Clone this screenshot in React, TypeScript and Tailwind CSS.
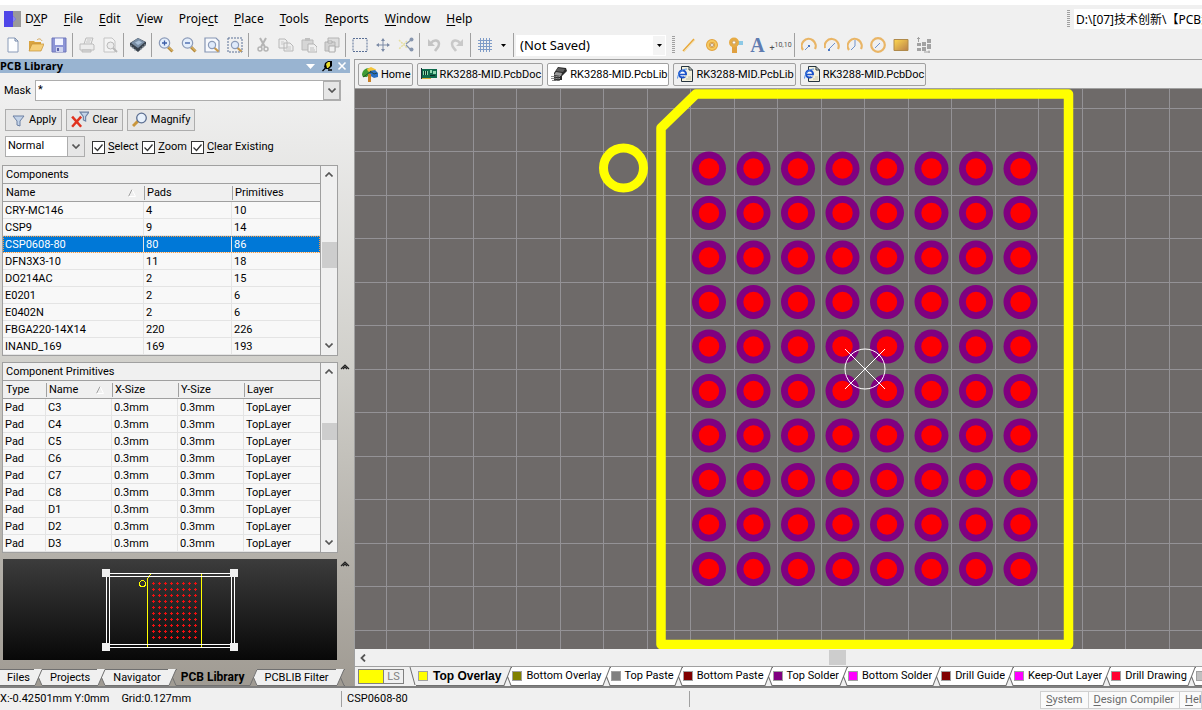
import type { ReactNode } from 'react'
import clsx from 'clsx'

const components = [
  ['CRY-MC146', '4', '10'],
  ['CSP9', '9', '14'],
  ['CSP0608-80', '80', '86'],
  ['DFN3X3-10', '11', '18'],
  ['DO214AC', '2', '15'],
  ['E0201', '2', '6'],
  ['E0402N', '2', '6'],
  ['FBGA220-14X14', '220', '226'],
  ['INAND_169', '169', '193'],
]

const primitives = ['C3', 'C4', 'C5', 'C6', 'C7', 'C8', 'D1', 'D2', 'D3'].map((name) => [
  'Pad',
  name,
  '0.3mm',
  '0.3mm',
  'TopLayer',
])

const menus = [
  ['D', 'X', 'P'],
  ['', 'F', 'ile'],
  ['', 'E', 'dit'],
  ['', 'V', 'iew'],
  ['Proje', 'c', 't'],
  ['', 'P', 'lace'],
  ['', 'T', 'ools'],
  ['', 'R', 'eports'],
  ['', 'W', 'indow'],
  ['', 'H', 'elp'],
]

const layers = [
  { name: 'Bottom Overlay', color: 'bg-[#808000]' },
  { name: 'Top Paste', color: 'bg-[#808080]' },
  { name: 'Bottom Paste', color: 'bg-[#800000]' },
  { name: 'Top Solder', color: 'bg-[#800080]' },
  { name: 'Bottom Solder', color: 'bg-[#ff00ff]' },
  { name: 'Drill Guide', color: 'bg-[#800000]' },
  { name: 'Keep-Out Layer', color: 'bg-[#ff00ff]' },
  { name: 'Drill Drawing', color: 'bg-[#ff0030]' },
  { name: '', color: 'bg-[#c0c0c0]' },
]

const range = (n: number) => Array.from({ length: n }, (_, i) => i)

const Icon = ({ children, size = 'size-4' }: { children: ReactNode; size?: string }) => (
  <svg viewBox="0 0 16 16" className={clsx('shrink-0', size)} fill="none" aria-hidden="true">
    {children}
  </svg>
)

const Tool = ({ label, children }: { label: string; children: ReactNode }) => (
  <button type="button" aria-label={label} className="flex h-6 w-[23px] shrink-0 items-center justify-center">
    <Icon>{children}</Icon>
  </button>
)

const Sep = () => <div className="mx-0.5 h-6 w-px shrink-0 bg-[#a0a0a0]" />

const Grip = () => (
  <svg viewBox="0 0 3 18" className="h-[18px] w-[3px] shrink-0" aria-hidden="true">
    {range(9).map((i) => (
      <path key={i} d={`M0 ${i * 2 + 0.5}h3`} stroke="#a0a0a0" />
    ))}
  </svg>
)

const Glass = ({ sign }: { sign: string }) => (
  <>
    <path d="M10 10l4.5 4.5" stroke="#b58a3c" strokeWidth="3" />
    <path d="M10.500 10l4 4" stroke="#ecc878" />
    <circle cx="6.500" cy="6" r="5.200" fill="#e4eefb" stroke="#8c9bb8" strokeWidth="1.200" />
    <path d={sign} stroke="#3c5fa8" strokeWidth="1.300" />
  </>
)

const LensOverlay = () => (
  <>
    <path d="M10 10.500l4.500 4" stroke="#c99a4c" strokeWidth="2.200" />
    <circle cx="8" cy="8" r="3.600" fill="#dfeafb" stroke="#8c9bb8" strokeWidth="1.200" />
  </>
)

const ChipIcon = () => (
  <Icon>
    <path d="M3 7l4-6 8 1 1 3-5 5v4H3z" fill="#2b2b2b" />
    <path d="M7 2l7 1-2 3-7-1z" fill="#5e5e5e" />
    <path d="M5 6l6 1-1 3-7-1z" fill="#9a9a9a" />
    <path d="M0 10.500h9M0 12.500h9M1 14.500h8" stroke="#8a8a8a" />
    <path d="M4 9v6M7 10v5" stroke="#4a4a4a" />
  </Icon>
)

const HomeIcon = () => (
  <Icon>
    <path d="M0 9c0-4 3-7 7-7l2 4-4 5H1z" fill="#3f9b34" />
    <path d="M5 3l4-2 5 2.500-1 3-7-1z" fill="#f3c53b" />
    <path d="M8 5l5-1 3 3v4l-4 1-5-3z" fill="#2b6fc4" />
    <path d="M6 8h3v8H6z" fill="#c98128" />
    <path d="M1 11c3-1 4-4 8-5M8 5l4 3 3-1" stroke="#1d3b24" strokeWidth="0.800" />
  </Icon>
)

const BoardIcon = () => (
  <Icon>
    <path d="M0 3h16v9H0z" fill="#0f6b4c" />
    <path d="M2 5h5v4H2zM9 4h2v3H9zM12 5h3v3h-3z" fill="#8ed8ae" />
    <path d="M3.500 5v4M5.500 5v4M9 9.500h5" stroke="#0a2f25" />
    <path d="M1 12.500h9" stroke="#d6b13c" />
    <path d="M0.500 2v11" stroke="#1c2f38" />
  </Icon>
)

const WebIcon = () => (
  <Icon>
    <path d="M4.500 0.500H12L15.500 4v11.500h-11z" fill="#f3f0dc" stroke="#26343f" />
    <path d="M12 0.500V4h3.500" stroke="#26343f" />
    <path d="M9 13h5M11 11h3" stroke="#c7c4a8" />
    <circle cx="5.500" cy="8" r="3.500" fill="#fff" stroke="#1b52c8" strokeWidth="2" />
    <path d="M3 8.500h6.500" stroke="#1b52c8" strokeWidth="1.600" />
    <path d="M7 10h3" stroke="#f3f0dc" strokeWidth="1.400" />
    <path d="M0.500 12.500C1 7 5 3 10 3" stroke="#4b8be6" />
  </Icon>
)

const arcs: Record<string, ReactNode> = {
  'Arc by Center': (
    <>
      <path d="M2 13A7 7 0 1 1 14 12" stroke="#e9b566" strokeWidth="2.200" />
      <path d="M4 13l4-4" stroke="#6e92cc" />
      <path d="M7 8h2v2H7z" fill="#4a77c4" />
    </>
  ),
  'Arc by Edge': (
    <>
      <path d="M1 11A7 7 0 1 1 14 12" stroke="#e9b566" strokeWidth="2.200" />
      <path d="M5 12l6-6" stroke="#6e92cc" />
      <path d="M4 12h2v2H4z" fill="#4a77c4" />
    </>
  ),
  'Arc any Angle': (
    <>
      <path d="M2 13A7 7 0 1 1 14 12" stroke="#e9b566" strokeWidth="2.200" />
      <path d="M8 3v6l-4 4" stroke="#6e92cc" />
    </>
  ),
  'Full Circle': (
    <>
      <circle cx="8" cy="8" r="6.800" stroke="#e9b566" strokeWidth="2.200" />
      <path d="M5 11l5-5" stroke="#6e92cc" />
    </>
  ),
}

const Toolbar = () => (
  <div className="flex h-[27px] items-center pb-px pl-px">
    <Tool label="New">
      <path d="M3 1h7l3 3v11H3z" fill="#fdfeff" stroke="#8a9bb8" />
      <path d="M10 1v3h3" stroke="#6f83a6" />
    </Tool>
    <Tool label="Open">
      <path d="M1 14V4h5l1 1h6v3H5z" fill="#d9a441" />
      <path d="M1 14l3-7h12l-3 7z" fill="#f5cf7a" stroke="#c48f34" strokeWidth="0.700" />
      <path d="M9 3c2-2 4-1 5 1" stroke="#d5a657" />
    </Tool>
    <Tool label="Save">
      <path d="M1 1h14v14H1z" fill="#8d95d6" stroke="#6f77ba" />
      <path d="M4 1.500h8V8H4z" fill="#f2f4ff" />
      <path d="M5 10h7v5H5z" fill="#cfd4ef" />
      <path d="M6 11h2v3H6z" fill="#5a62a8" />
    </Tool>
    <Sep />
    <Tool label="Print">
      <path d="M5 7l2-6h7l-2 6M1 7h13l1 1v5H1z" fill="#ececec" stroke="#bcbcbc" />
      <path d="M3 13h9v2H3z" fill="#dadada" stroke="#bcbcbc" />
      <path d="M8 3h4M7 5h4" stroke="#c8c8c8" />
    </Tool>
    <Tool label="Print Preview">
      <path d="M2 1h8l3 3v11H2z" fill="#f4f4f4" stroke="#c4c4c4" />
      <circle cx="8.500" cy="8.500" r="3.500" fill="#ececec" stroke="#bababa" />
      <path d="M11 11l4 4" stroke="#bababa" strokeWidth="2" />
    </Tool>
    <Sep />
    <Tool label="Browse Components">
      <path d="M0 6l8-5 8 4v3l-8 7-8-6z" fill="#39424c" />
      <path d="M1 6l7-5 7 4-7 6z" fill="#7b8fa5" />
      <path d="M5 5.500l4-2 3 2-4 2.500z" fill="#a9bfd6" />
      <path d="M1 8v2M3 10v2M5 12v2M11 11v2M13 9v2M15 7v2" stroke="#9aa4ae" />
    </Tool>
    <Sep />
    <Tool label="Zoom In">
      <Glass sign="M4 6h5M6.500 3.500v5" />
    </Tool>
    <Tool label="Zoom Out">
      <Glass sign="M4 6h5" />
    </Tool>
    <Tool label="Fit Document">
      <path d="M1 1h11l3 3v11H1z" fill="#f7f9fd" stroke="#8595b4" strokeWidth="1.200" />
      <LensOverlay />
    </Tool>
    <Tool label="Zoom Area">
      <path d="M1 1h14v14H1z" stroke="#5b7096" strokeDasharray="2 1" />
      <LensOverlay />
    </Tool>
    <Sep />
    <Tool label="Cut">
      <path d="M5 1l5 9M11 1L6 10" stroke="#b4b4b4" strokeWidth="2" />
      <circle cx="5" cy="12" r="2" stroke="#b4b4b4" strokeWidth="1.500" />
      <circle cx="11" cy="12" r="2" stroke="#b4b4b4" strokeWidth="1.500" />
    </Tool>
    <Tool label="Copy">
      <path d="M1 2h6l2 2v7H1zM6 6h6l3 3v5H6z" fill="#eee" stroke="#b8b8b8" />
      <path d="M8 10h5M8 12h5M3 5h3M3 7h3" stroke="#c8c8c8" />
    </Tool>
    <Tool label="Paste">
      <path d="M1 3h11v10H1z" fill="#d6d6d6" stroke="#bababa" />
      <path d="M4 1h5v3H4z" fill="#c0c0c0" />
      <path d="M7 7h6l3 3v5H7z" fill="#f0f0f0" stroke="#b4b4b4" />
      <path d="M9 11h4M9 13h5" stroke="#c0c0c0" />
    </Tool>
    <Tool label="Rubber Stamp">
      <path d="M4 1h11v9H4z" fill="#dedede" stroke="#b4b4b4" />
      <path d="M1 5h10v9H1z" fill="#d2d2d2" stroke="#b4b4b4" />
      <path d="M4 4h4v2H4zM5 9h6v6H5z" fill="#f0f0f0" stroke="#acacac" />
    </Tool>
    <Sep />
    <Tool label="Select Area">
      <path d="M1 1.500h14v13H1z" stroke="#5b7096" strokeDasharray="2 1" />
    </Tool>
    <Tool label="Move Selection">
      <path d="M8 2v12M2 8h12" stroke="#7c8ba6" />
      <path d="M8 1L6 4h4zM8 15l-2-3h4zM1 8l3-2v4zM15 8l-3-2v4z" fill="#7c8ba6" />
    </Tool>
    <Tool label="Deselect All">
      <path d="M1 3l8 8M9 4l-8 8" stroke="#e6dfa0" strokeWidth="1.500" strokeDasharray="2 1" />
      <path d="M8 7l5-4M8 8l5 5" stroke="#8695ad" strokeWidth="1.300" />
      <circle cx="13.500" cy="2.500" r="2" fill="#8695ad" />
      <circle cx="13.500" cy="12.500" r="2" fill="#8695ad" />
    </Tool>
    <Sep />
    <Tool label="Undo">
      <path d="M5 6c3-4 8-3 8 1 0 3-2 4-4 7" stroke="#c4c4c4" strokeWidth="2.500" />
      <path d="M2 2v7h7z" fill="#c4c4c4" />
    </Tool>
    <Tool label="Redo">
      <path d="M11 6C8 2 3 3 3 7c0 3 2 4 4 7" stroke="#c9c9c9" strokeWidth="2.500" />
      <path d="M14 2v7H7z" fill="#c9c9c9" />
    </Tool>
    <Sep />
    <Tool label="Grids">
      <path d="M3.500 1v14M6.500 1v14M9.500 1v14M12.500 1v14M1 3.500h14M1 6.500h14M1 9.500h14M1 12.500h14" stroke="#7f9cc8" />
    </Tool>
    <button type="button" aria-label="Grid options" className="flex h-6 w-[15px] items-center justify-center">
      <svg viewBox="0 0 5 3" className="h-[3px] w-[5px]">
        <path d="M0 0h5L2.500 3z" />
      </svg>
    </button>
    <Sep />
    <div className="relative h-[21px] w-[150px] shrink-0">
      <select
        aria-label="Variant"
        className="size-full appearance-none bg-white pl-1 font-['Noto_Sans',sans-serif] text-[13px] leading-5 outline-none"
      >
        <option>(Not Saved)</option>
      </select>
      <span className="pointer-events-none absolute inset-y-px right-px flex w-3 items-center justify-center bg-[#f4f4f4]">
        <svg viewBox="0 0 5 3" className="h-[3px] w-[5px]">
          <path d="M0 0h5L2.500 3z" />
        </svg>
      </span>
    </div>
    <div className="flex items-center pr-0.5 pl-1.5">
      <Grip />
    </div>
    <Tool label="Place Line">
      <path d="M2 14L13 2" stroke="#e8a838" strokeWidth="1.500" />
      <path d="M3 15L14 3" stroke="#f6d78c" strokeWidth="0.700" />
    </Tool>
    <Tool label="Place Pad">
      <circle cx="8" cy="8" r="4" stroke="#e3a23a" strokeWidth="4" />
      <circle cx="8" cy="8" r="4" stroke="#f4c963" strokeWidth="2" />
      <circle cx="8" cy="8" r="1.500" fill="#fff" stroke="#a8762a" strokeWidth="0.700" />
    </Tool>
    <Tool label="Place Via">
      <path d="M8 4h8v4H8z" fill="#8cc9e6" />
      <path d="M5 8h5v8H5z" fill="#e0a040" />
      <circle cx="7" cy="5.500" r="3.500" fill="#fff" stroke="#e6ab45" strokeWidth="3" />
      <circle cx="7" cy="5.500" r="1.700" stroke="#b98332" strokeWidth="0.800" />
    </Tool>
    <button
      type="button"
      aria-label="Place String"
      className="h-6 w-[23px] shrink-0 text-center font-['Liberation_Serif',serif] text-xl leading-6 font-bold text-[#5f7cb0]"
    >
      A
    </button>
    <button
      type="button"
      aria-label="Place Coordinate"
      className="flex h-6 w-[23px] shrink-0 items-center justify-center text-[#505050]"
    >
      <span className="pt-1.5 text-[9px] leading-3">+</span>
      <span className="text-[7px] leading-3">10,10</span>
    </button>
    <Sep />
    {Object.entries(arcs).map(([label, shape]) => (
      <Tool key={label} label={label}>
        {shape}
      </Tool>
    ))}
    <Tool label="Place Fill">
      <defs>
        <linearGradient id="fill" x1="0" y1="0" x2="1" y2="1">
          <stop offset="0" stopColor="#ffd94f" />
          <stop offset="1" stopColor="#b97f4a" />
        </linearGradient>
      </defs>
      <path d="M1 2.500h14v11H1z" fill="url(#fill)" stroke="#b08a4a" />
    </Tool>
    <Tool label="Array Placement">
      <path d="M6 5h4v4H6zM11 2h4v4h-4zM6 10h4v4H6zM11 7h4v5h-4zM1 6h4v3H1zM1 11h4v3H1z" fill="#a2a2a2" />
      <path d="M2.500 5V0M1 1.500h3M8 15h6M13 13.500v3" stroke="#a2a2a2" />
    </Tool>
  </div>
)

const Header = () => (
  <header className="shrink-0 bg-[#f0f0f0]">
    <div className="h-[5px] bg-white" />
    <div className="flex h-[27px] items-center font-['Noto_Sans',sans-serif] text-xs leading-4">
      <svg viewBox="0 0 17 16" className="ml-1 h-4 w-[17px] shrink-0">
        <path d="M9 0h8v16H9z" fill="#9a9a9a" />
        <path d="M0 0h9v5l3 3-3 3v5H0z" fill="#4f46e8" />
        <path d="M9 5l3 3-3 3z" fill="#8d89e8" />
      </svg>
      <nav className="flex flex-1 gap-4 pl-1">
        {menus.map(([before, key, after]) => (
          <button type="button" key={before + key + after}>
            {before}
            <span className="underline underline-offset-2">{key}</span>
            {after}
          </button>
        ))}
      </nav>
      <Grip />
      <input
        aria-label="Address"
        readOnly
        value="D:\[07]技术创新\【PCB封装】"
        className="ml-1 h-5 w-[128px] bg-white pl-0.5 font-['Noto_Sans','Noto_Sans_CJK_SC',sans-serif] text-xs outline-none"
      />
    </div>
    <Toolbar />
  </header>
)

const Chevron = ({ up }: { up?: boolean }) => (
  <svg viewBox="0 0 8 5" className="h-[5px] w-2" fill="none">
    <path d={up ? 'M0.500 4.500L4 1l3.500 3.500' : 'M0.500 0.500L4 4 7.500 0.500'} stroke="#555" strokeWidth="1.600" />
  </svg>
)

const Collapse = () => (
  <button type="button" aria-label="Collapse" className="ml-0.5 pt-0.5">
    <svg viewBox="0 0 10 6" className="h-1.5 w-2.5" fill="none">
      <path d="M1 5l4-4 4 4M3 5l2-2 2 2" stroke="#222" strokeWidth="1.200" />
    </svg>
  </button>
)

interface GridBoxProps {
  title: string
  columns: { label: string; width: string }[]
  rows: string[][]
  sorted: number
  selected?: number
  collapsible?: boolean
  thumb: string
}

const GridBox = ({ title, columns, rows, sorted, selected, collapsible, thumb }: GridBoxProps) => (
  <div className="flex items-start">
    <div className="flex w-[336px] border border-[#a0a0a0] bg-[#f8f8f8]">
      <table className="w-[317px] table-fixed border-separate border-spacing-0 border-r border-[#a0a0a0] text-left">
        <caption className="h-[18px] border-r border-b border-[#a0a0a0] bg-[#f0f0f0] pt-px pl-[3px] text-left leading-4">
          {title}
        </caption>
        <thead>
          <tr>
            {columns.map(({ label, width }, i) => (
              <th
                key={label}
                className={clsx('h-[18px] border-b border-[#a0a0a0] bg-[#f0f0f0] p-0 pt-px font-normal', width)}
              >
                <div
                  className={clsx(
                    'flex h-3.5 items-center justify-between leading-[14px]',
                    i > 0 ? 'border-l border-[#a0a0a0] pl-0.5' : 'pl-[3px]',
                  )}
                >
                  {label}
                  {i === sorted && (
                    <svg viewBox="0 0 8 8" className="mr-2 size-2" fill="none">
                      <path d="M0.500 7.500L4 0.500" stroke="#a0a0a0" />
                      <path d="M4 0.500l3.500 7H0.500" stroke="#fff" />
                    </svg>
                  )}
                </div>
              </th>
            ))}
          </tr>
        </thead>
        <tbody>
          {rows.map((row, r) => (
            <tr
              key={row.join()}
              className={clsx(
                r === selected &&
                  'bg-[#0078d7] text-white outline-1 -outline-offset-1 outline-dotted outline-[#ff9a3c]',
              )}
            >
              {row.map((cell, c) => (
                <td
                  key={c}
                  className="h-[17px] border-r border-b border-[#e4e4e4] p-0 pt-px pl-0.5 leading-[15px] last:border-r-0"
                >
                  {cell}
                </td>
              ))}
            </tr>
          ))}
        </tbody>
      </table>
      <div className="flex flex-1 flex-col items-center bg-[#f0f0f0] pb-px">
        <button type="button" aria-label="Scroll up" className="flex h-[17px] items-center">
          <Chevron up />
        </button>
        <div className="flex w-full flex-1 flex-col items-center">
          <div className={clsx('w-[15px] bg-[#cdcdcd]', thumb)} />
        </div>
        <button type="button" aria-label="Scroll down" className="flex h-[17px] items-center">
          <Chevron />
        </button>
      </div>
    </div>
    {collapsible && <Collapse />}
  </div>
)

const Preview = () => (
  <div className="flex items-start">
    <svg viewBox="2 559 336 101" className="h-[101px] w-[336px] shrink-0" fill="none" shapeRendering="crispEdges">
      <defs>
        <linearGradient id="shade" x1="0" y1="0" x2="0" y2="1">
          <stop offset="0" stopColor="#3c3c3c" />
          <stop offset="1" stopColor="#080808" />
        </linearGradient>
      </defs>
      <path d="M3 559h334v101H3z" fill="url(#shade)" />
      <path d="M147.500 647V579l3-5M201.500 574v73" stroke="#ff0" />
      <circle cx="142.500" cy="583.500" r="3" stroke="#ff0" />
      {range(80).map((i) => (
        <path
          key={i}
          d={`M${152 + (i % 8) * 6} ${583.5 + Math.floor(i / 8) * 6}h3m-1.500 -1.500v3`}
          stroke="#f01010"
        />
      ))}
      <path d="M106.500 573.500h128v74h-128zM109.500 576.500h122v68h-122z" stroke="#fff" />
      <path d="M102 569h8v8h-8zM230 569h8v8h-8zM102 643h8v8h-8zM230 643h8v8h-8z" fill="#f0f0f0" />
    </svg>
    <Collapse />
  </div>
)

const Check = ({ id, letter, rest }: { id: string; letter: string; rest: string }) => (
  <span className="flex items-center gap-[3px]">
    <span className="relative flex size-[13px]">
      <input
        id={id}
        type="checkbox"
        defaultChecked
        className="peer size-[13px] appearance-none border border-[#333] bg-white"
      />
      <svg viewBox="0 0 13 13" className="pointer-events-none absolute inset-0 opacity-0 peer-checked:opacity-100">
        <path d="M2.500 6.500l3 3 5-6" stroke="#333" strokeWidth="1.300" fill="none" />
      </svg>
    </span>
    <label htmlFor={id}>
      <span className="underline underline-offset-2">{letter}</span>
      {rest}
    </label>
  </span>
)

const PanelButton = ({ children }: { children: ReactNode }) => (
  <button
    type="button"
    className="flex h-[22px] items-center gap-[3px] border border-[#adadad] bg-[#e6e6e6] px-1 leading-4"
  >
    {children}
  </button>
)

// Slanted edge shared by two neighbouring tabs
const Slant = ({ left, right, gap }: { left: string; right: string; gap: string }) => (
  <svg viewBox="0 0 9 17" className="h-full w-[9px] shrink-0" preserveAspectRatio="none" fill="none">
    <path d="M0 0h8L1 17H0z" fill={left} />
    <path d="M8 0h1v17H8L4.500 8z" fill={right} />
    <path d="M1 17L4.500 8 8 17z" fill={gap} />
    <path d="M0 16.500h1L8 0.500h1M4.500 8.500L8 16.500h1" stroke="#707070" />
  </svg>
)

const PanelTabs = () => {
  const tabs = ['Files', 'Projects', 'Navigator', 'PCB Library', 'PCBLIB Filter']
  const fill = (i: number) => (i === 3 || i >= tabs.length ? 'none' : '#f0f0f0')
  return (
    <div role="tablist" className="mt-auto flex h-[17px]">
      {tabs.map((name, i) => (
        <div key={name} className="flex">
          <button
            type="button"
            role="tab"
            aria-selected={i === 3}
            className={clsx(
              'border-b border-[#707070] leading-[14px]',
              i === 3 ? 'px-1 text-xs font-bold' : 'border-t bg-[#f0f0f0]',
              i === 0 && 'pr-1 pl-[7px]',
              i !== 0 && i !== 3 && 'px-[7px]',
            )}
          >
            {name}
          </button>
          <Slant left={fill(i)} right={fill(i + 1)} gap="none" />
        </div>
      ))}
    </div>
  )
}

const LibraryPanel = () => (
  <aside className="flex w-[354px] shrink-0 flex-col bg-linear-to-b from-[#f0f0f0] from-5% via-[#d0cfca] via-50% to-[#a09b93]">
    <div className="flex h-3.5 w-[350px] items-center justify-between overflow-hidden bg-[#99b4d1]">
      <h2 className="font-['Noto_Sans',sans-serif] text-[11px] leading-[14px] font-bold">PCB Library</h2>
      <svg viewBox="0 0 44 12" className="h-3 w-11">
        <path d="M0 4h9L4.500 9z" fill="#fff" />
        <path d="M19 3l3-2h4v5l-3 3h-3l-2-2z" fill="#000" />
        <path d="M20 4l2-2h2v4l-2 2h-1z" fill="#e8dc2c" />
        <path d="M16.500 11l3-3M22 10h4" stroke="#000" strokeWidth="1.300" />
        <path d="M32.500 2.500l7 7M39.500 2.500l-7 7" stroke="#fff" strokeWidth="1.600" />
      </svg>
    </div>
    <div className="flex items-center pt-[7px] pl-1">
      <label htmlFor="mask" className="w-[31px] pt-0.5">
        Mask
      </label>
      <div className="flex h-[21px] w-[306px] border border-[#adadad] bg-white">
        <input id="mask" defaultValue="*" className="min-w-0 flex-1 bg-transparent px-0.5 outline-none" />
        <button
          type="button"
          aria-label="Mask history"
          className="flex w-[17px] items-center justify-center border border-[#adadad] bg-[#e6e6e6]"
        >
          <Chevron />
        </button>
      </div>
    </div>
    <div className="flex gap-1 pt-2 pl-[5px]">
      <PanelButton>
        <Icon>
          <path d="M3 4h11l-4 5v5l-3-1V9z" fill="#c3d3e8" stroke="#6c80a3" />
        </Icon>
        <span className="pr-px">Apply</span>
      </PanelButton>
      <PanelButton>
        <Icon size="size-[18px]">
          <path d="M8 1h8l-3 4v4l-2-1V5z" fill="#c3d3e8" stroke="#6c80a3" />
          <path d="M1 5l8 9M9 5l-8 9" stroke="#e0321e" strokeWidth="2.200" />
        </Icon>
        Clear
      </PanelButton>
      <PanelButton>
        <Icon>
          <path d="M6 9l-5 5" stroke="#c9963c" strokeWidth="3" />
          <circle cx="9.500" cy="6" r="4.800" fill="#e8f1fc" stroke="#5c6f92" strokeWidth="1.300" />
        </Icon>
        Magnify
      </PanelButton>
    </div>
    <div className="flex items-center pt-[5px] pb-2 pl-[5px]">
      <div className="relative mr-[7px] h-[21px] w-20">
        <select
          aria-label="Mode"
          className="size-full appearance-none border border-[#adadad] bg-white pl-0.5 outline-none"
        >
          <option>Normal</option>
        </select>
        <span className="pointer-events-none absolute inset-y-0 right-0 flex w-[18px] items-center justify-center border border-[#adadad] bg-[#e6e6e6]">
          <Chevron />
        </span>
      </div>
      <div className="flex gap-1 pt-0.5">
        <Check id="select" letter="S" rest="elect" />
        <Check id="zoom" letter="Z" rest="oom" />
        <Check id="existing" letter="C" rest="lear Existing" />
      </div>
    </div>
    <div className="flex flex-col gap-1.5 pl-0.5">
      <GridBox
        title="Components"
        columns={[
          { label: 'Name', width: 'w-[141px]' },
          { label: 'Pads', width: 'w-[88px]' },
          { label: 'Primitives', width: 'w-[88px]' },
        ]}
        rows={components}
        sorted={0}
        selected={2}
        thumb="mt-[59px] h-[26px]"
      />
      <GridBox
        title="Component Primitives"
        columns={[
          { label: 'Type', width: 'w-[43px]' },
          { label: 'Name', width: 'w-[66px]' },
          { label: 'X-Size', width: 'w-[66px]' },
          { label: 'Y-Size', width: 'w-[66px]' },
          { label: 'Layer', width: 'w-[76px]' },
        ]}
        rows={primitives}
        sorted={1}
        collapsible
        thumb="mt-[43px] h-[17px]"
      />
      <Preview />
    </div>
    <PanelTabs />
  </aside>
)

const documents = [
  { name: 'Home', icon: <HomeIcon /> },
  { name: 'RK3288-MID.PcbDoc', icon: <BoardIcon /> },
  { name: 'RK3288-MID.PcbLib', icon: <ChipIcon />, active: true },
  { name: 'RK3288-MID.PcbLib', icon: <WebIcon /> },
  { name: 'RK3288-MID.PcbDoc', icon: <WebIcon /> },
]

const Footprint = () => (
  <svg
    viewBox="355 89 847 560"
    preserveAspectRatio="xMinYMin slice"
    className="min-h-0 w-full flex-1 bg-[#6e6a69]"
    fill="none"
    role="img"
    aria-label="CSP0608-80 footprint"
  >
    <g stroke="#949296" shapeRendering="crispEdges">
      {range(20).map((i) => (
        <path key={i} d={`M${Math.floor(386 + i * 43.5) + 0.5} 89v560`} />
      ))}
      {range(13).map((i) => (
        <path key={i} d={`M355 ${Math.floor(108 + i * 43.5) + 0.5}h847`} />
      ))}
    </g>
    <path d="M661 128L696 94h372.500v550.500H661z" stroke="#ff0" strokeWidth="9.500" strokeLinejoin="round" />
    <circle cx="623.500" cy="168" r="20" stroke="#ff0" strokeWidth="9" />
    {range(80).map((i) => {
      const cx = 709 + (i % 8) * 44.5
      const cy = 168.5 + Math.floor(i / 8) * 44.5
      return (
        <g key={i}>
          <circle cx={cx} cy={cy} r="17" fill="#800080" />
          <circle cx={cx} cy={cy} r="10.200" fill="#f00" />
        </g>
      )
    })}
    <circle cx="865" cy="369" r="20" stroke="#fff" />
    <path d="M845 349l40 40M885 349l-40 40" stroke="#fff" />
  </svg>
)

const LayerTabs = () => (
  <div className="flex h-5 overflow-hidden border-t border-[#a0a0a0] bg-[#f0f0f0]">
    <button type="button" className="my-0.5 ml-[3px] flex h-[15px] w-[46px] shrink-0 border border-[#808080] text-[#808080]">
      <span className="h-full w-[25px] border-r border-[#808080] bg-[#ff0]" />
      <span className="flex-1 leading-[14px]">LS</span>
    </button>
    <svg viewBox="0 0 12 19" className="h-[19px] w-3 shrink-0" fill="none">
      <path d="M6 0l5 18" stroke="#707070" />
    </svg>
    <button
      type="button"
      className="flex shrink-0 items-center gap-[5px] border-b border-[#707070] pr-0.5 pl-0.5 font-['Liberation_Sans',sans-serif] text-xs font-bold"
    >
      <span className="size-2.5 border border-[#a0a0a0] bg-[#ff0]" />
      <span className="leading-4">Top Overlay</span>
    </button>
    {layers.map(({ name, color }, i) => (
      <div key={name} className="flex shrink-0">
        <Slant left={i === 0 ? '#f0f0f0' : '#fff'} right="#fff" gap="#f0f0f0" />
        <button
          type="button"
          aria-label={name || 'More layers'}
          className="flex items-center gap-1 border-b border-[#707070] bg-white"
        >
          <span className={clsx('size-2.5 border border-[#a0a0a0]', color)} />
          <span className="leading-4">{name}</span>
        </button>
      </div>
    ))}
  </div>
)

const Editor = () => (
  <section className="flex min-w-0 flex-1 flex-col border-t border-l border-[#a0a0a0]">
    <div className="flex h-[29px] shrink-0 items-center gap-1 border-b border-[#a0a0a0] bg-[#f0f0f0] pl-[3px]">
      {documents.map(({ name, icon, active }, i) => (
        <button
          type="button"
          key={i}
          className={clsx(
            'flex h-[23px] items-center gap-[3px] rounded-xs border border-[#a0a0a0] pr-px pl-[3px]',
            active && 'bg-white',
          )}
        >
          {icon}
          <span className="pt-0.5 leading-4">{name}</span>
        </button>
      ))}
    </div>
    <Footprint />
    <div className="flex h-[17px] shrink-0 items-center bg-[#f0f0f0]">
      <button type="button" aria-label="Scroll left" className="w-[17px] pl-[5px]">
        <svg viewBox="0 0 6 8" className="h-2 w-1.5" fill="none">
          <path d="M5 0.500L1.500 4 5 7.500" stroke="#555" strokeWidth="1.800" />
        </svg>
      </button>
      <div className="flex flex-1">
        <div className="ml-[55%] h-[15px] w-[17px] bg-[#cdcdcd]" />
      </div>
    </div>
    <LayerTabs />
  </section>
)

const StatusBar = () => (
  <footer className="flex h-6 shrink-0 border-t-2 border-[#808080] bg-[#f0f0f0]">
    <div className="my-[3px] flex w-[342px] shrink-0 items-center gap-3 border-r border-[#a0a0a0] whitespace-nowrap">
      <span>X:-0.42501mm Y:0mm</span>
      <span>Grid:0.127mm</span>
    </div>
    <div className="my-[3px] flex w-[348px] items-center border-r border-[#a0a0a0] pl-[5px]">CSP0608-80</div>
    <div className="mt-[3px] ml-auto flex h-[18px] w-[162px] shrink-0 overflow-hidden border border-[#d0d0d0] bg-[#fafafa] whitespace-nowrap text-[#6a6a6a]">
      {[
        ['S', 'ystem'],
        ['D', 'esign Compiler'],
        ['H', 'elp'],
      ].map(([key, rest]) => (
        <button type="button" key={key} className="shrink-0 border-r border-[#d0d0d0] px-[5px] leading-4">
          <span className="underline underline-offset-2">{key}</span>
          {rest}
        </button>
      ))}
    </div>
  </footer>
)

export default function App() {
  return (
    <div className="flex h-screen w-full flex-col overflow-hidden bg-[#f0f0f0] font-[Roboto,'Liberation_Sans',sans-serif] text-[11px] text-black">
      <Header />
      <main className="flex min-h-0 flex-1">
        <LibraryPanel />
        <Editor />
      </main>
      <StatusBar />
    </div>
  )
}
